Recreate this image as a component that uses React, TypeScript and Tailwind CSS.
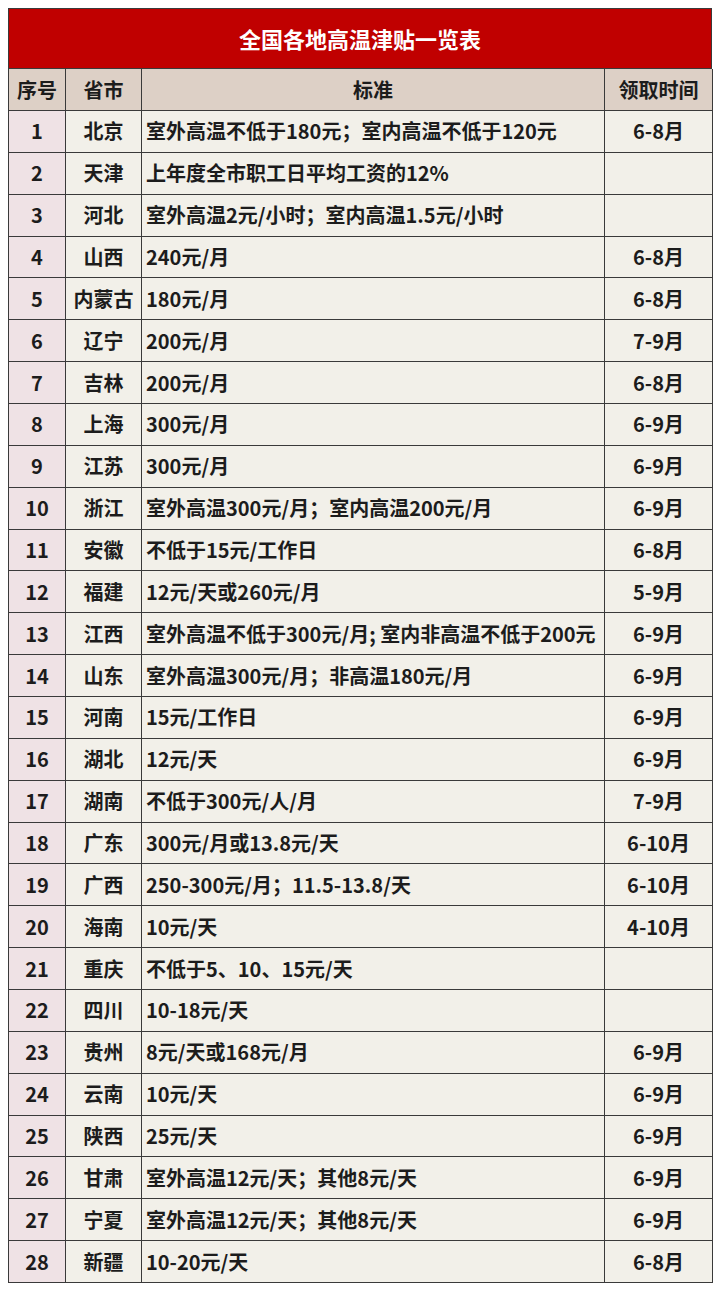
const rows: [string, string, string][] = [
  ["北京", "室外高温不低于180元；室内高温不低于120元", "6-8月"],
  ["天津", "上年度全市职工日平均工资的12%", ""],
  ["河北", "室外高温2元/小时；室内高温1.5元/小时", ""],
  ["山西", "240元/月", "6-8月"],
  ["内蒙古", "180元/月", "6-8月"],
  ["辽宁", "200元/月", "7-9月"],
  ["吉林", "200元/月", "6-8月"],
  ["上海", "300元/月", "6-9月"],
  ["江苏", "300元/月", "6-9月"],
  ["浙江", "室外高温300元/月；室内高温200元/月", "6-9月"],
  ["安徽", "不低于15元/工作日", "6-8月"],
  ["福建", "12元/天或260元/月", "5-9月"],
  ["江西", "室外高温不低于300元/月; 室内非高温不低于200元", "6-9月"],
  ["山东", "室外高温300元/月；非高温180元/月", "6-9月"],
  ["河南", "15元/工作日", "6-9月"],
  ["湖北", "12元/天", "6-9月"],
  ["湖南", "不低于300元/人/月", "7-9月"],
  ["广东", "300元/月或13.8元/天", "6-10月"],
  ["广西", "250-300元/月；11.5-13.8/天", "6-10月"],
  ["海南", "10元/天", "4-10月"],
  ["重庆", "不低于5、10、15元/天", ""],
  ["四川", "10-18元/天", ""],
  ["贵州", "8元/天或168元/月", "6-9月"],
  ["云南", "10元/天", "6-9月"],
  ["陕西", "25元/天", "6-9月"],
  ["甘肃", "室外高温12元/天；其他8元/天", "6-9月"],
  ["宁夏", "室外高温12元/天；其他8元/天", "6-9月"],
  ["新疆", "10-20元/天", "6-8月"],
]

const cell = "border-r-[1.5px] border-b-[1.5px] border-[#3a3a3a] flex items-center"

export default function App() {
  return (
    <div
      className="w-[720px] h-[1291px] bg-white pt-2 pl-2 text-[#1c1c1c] font-bold"
      style={{ fontFamily: '"Noto Sans CJK SC", "Noto Sans", sans-serif' }}
    >
      <div className="w-[704px] border-l-[1.5px] border-t-[1.5px] border-[#3a3a3a]">
        <div className="h-[60px] bg-[#c00000] border-r-[1.5px] border-b-[1.5px] border-[#3a3a3a] flex items-center justify-center text-white text-[22px]">
          全国各地高温津贴一览表
        </div>
        <div className="grid grid-cols-[57px_76px_463px_108px] text-[20px]">
          <div className={`${cell} h-[42px] bg-[#ddd0c6] justify-center`}>序号</div>
          <div className={`${cell} h-[42px] bg-[#ddd0c6] justify-center`}>省市</div>
          <div className={`${cell} h-[42px] bg-[#ddd0c6] justify-center`}>标准</div>
          <div className={`${cell} h-[42px] bg-[#ddd0c6] justify-center`}>领取时间</div>
          {rows.map(([prov, std, time], i) => (
            <div key={i} className="contents">
              <div className={`${cell} h-[41.86px] bg-[#efe2e5] justify-center`}>{i + 1}</div>
              <div className={`${cell} h-[41.86px] bg-[#f2f0e9] justify-center`}>{prov}</div>
              <div className={`${cell} h-[41.86px] bg-[#f2f0e9] pl-[4px] whitespace-nowrap`}>{std}</div>
              <div className={`${cell} h-[41.86px] bg-[#f2f0e9] justify-center`}>{time}</div>
            </div>
          ))}
        </div>
      </div>
    </div>
  )
}
